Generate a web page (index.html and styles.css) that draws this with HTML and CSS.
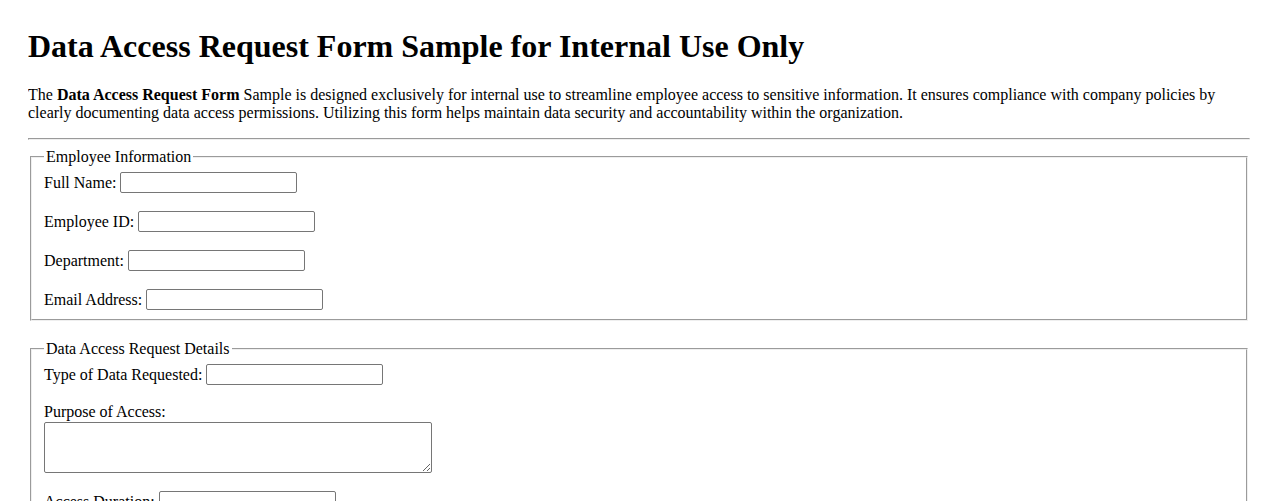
FILE: index.html
```html
<!DOCTYPE html>
<html lang="en">
<head>
    <meta charset="UTF-8">
    <meta name="viewport" content="width=device-width, initial-scale=1.0">
    <title>Data Access Request Form Sample for Internal Use Only</title>
    <link rel="stylesheet" href="styles.css">
</head>
<body>
    <h1 class="page-title">Data Access Request Form Sample for Internal Use Only</h1>
    <p class="intro">The <strong>Data Access Request Form</strong> Sample is designed exclusively for internal use to streamline employee access to sensitive information. It ensures compliance with company policies by clearly documenting data access permissions. Utilizing this form helps maintain data security and accountability within the organization.</p>
    <hr class="divider">

    <form class="request-form">
        <fieldset class="form-section">
            <legend class="section-title">Employee Information</legend>
            <div class="field">
                <label for="fullName">Full Name:</label>
                <input type="text" id="fullName" class="text-input">
            </div>
            <div class="field">
                <label for="employeeId">Employee ID:</label>
                <input type="text" id="employeeId" class="text-input">
            </div>
            <div class="field">
                <label for="department">Department:</label>
                <input type="text" id="department" class="text-input">
            </div>
            <div class="field">
                <label for="email">Email Address:</label>
                <input type="email" id="email" class="text-input">
            </div>
        </fieldset>

        <fieldset class="form-section">
            <legend class="section-title">Data Access Request Details</legend>
            <div class="field">
                <label for="dataType">Type of Data Requested:</label>
                <input type="text" id="dataType" class="text-input">
            </div>
            <div class="field field-stacked">
                <label for="purpose">Purpose of Access:</label>
                <textarea id="purpose" class="text-area"></textarea>
            </div>
            <div class="field">
                <label for="duration">Access Duration:</label>
                <input type="text" id="duration" class="text-input">
            </div>
        </fieldset>
    </form>
</body>
</html>
```

FILE: styles.css
```css
body {
    margin: 28px;
    font-family: "Liberation Serif", "Times New Roman", serif;
    font-size: 16px;
    color: black;
    background-color: white;
}
.page-title {
    font-size: 32px;
    font-weight: bold;
    margin: 0 0 21px;
}
.intro {
    margin: 0 0 16px;
    line-height: 18px;
}
.divider {
    margin: 0 0 8px;
}
.request-form {
    margin: 0;
}
.form-section {
    margin: 0 2px 19px;
    padding: 6px 12px 9px;
}
.section-title {
    padding: 0 2px;
}
.field {
    display: flex;
    align-items: center;
    gap: 4px;
    margin-bottom: 18px;
}
.field:last-child {
    margin-bottom: 0;
}
.field-stacked {
    flex-direction: column;
    align-items: flex-start;
    gap: 1px;
}
.text-input {
    box-sizing: border-box;
    width: 177px;
    height: 21px;
    padding: 1px 2px;
    border: 1px solid #767676;
    border-radius: 2px;
    font: 13.33px Arial, sans-serif;
}
.text-area {
    box-sizing: border-box;
    width: 388px;
    height: 51px;
    padding: 2px;
    border: 1px solid #767676;
    border-radius: 2px;
    font: 13.33px "Liberation Mono", monospace;
}
```
